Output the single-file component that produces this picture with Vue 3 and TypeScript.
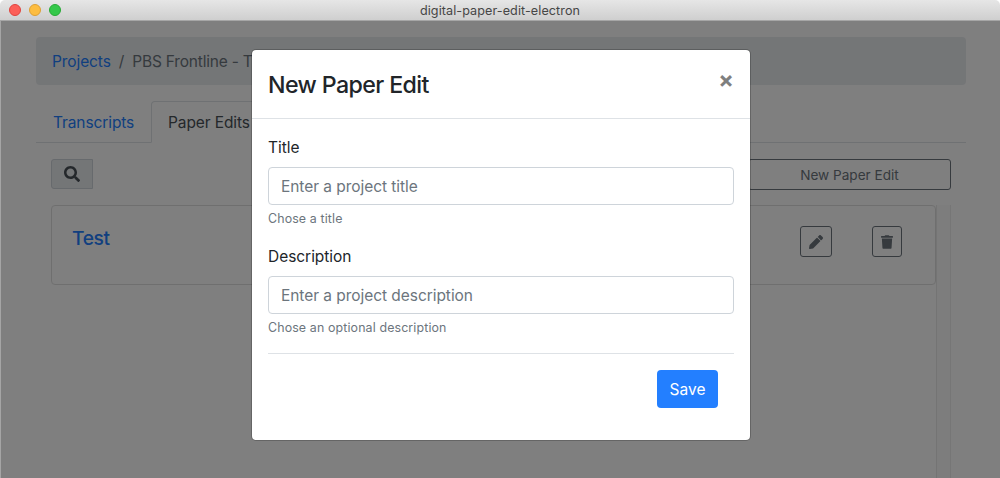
<script setup lang="ts">
import { ref } from 'vue'

interface Field {
  id: string
  label: string
  placeholder: string
  help: string
}

const fields: Field[] = [
  { id: 'title', label: 'Title', placeholder: 'Enter a project title', help: 'Chose a title' },
  { id: 'description', label: 'Description', placeholder: 'Enter a project description', help: 'Chose an optional description' },
]
const values = ref<Record<string, string>>({ title: '', description: '' })
</script>

<template>
  <div class="window">
    <header class="titlebar">
      <div class="lights">
        <span class="light red"></span><span class="light amber"></span><span class="light green"></span>
      </div>
      <span class="window-title">digital-paper-edit-electron</span>
    </header>

    <main class="page">
      <nav class="breadcrumb">
        <a class="crumb-link">Projects</a><span class="slash">/</span><span class="crumb">PBS Frontline - The Facebook Dilemma</span>
      </nav>
      <div class="tabs">
        <a class="tab first">Transcripts</a>
        <a class="tab active"><span>Paper Edits</span></a>
      </div>
      <section class="panel">
        <div class="toolbar">
          <button class="search" aria-label="Search">
            <svg width="16" height="16" viewBox="0 0 512 512"><path fill="currentColor" d="M505 442.700L405.300 343c-4.500-4.500-10.600-7-17-7H372c27.600-35.300 44-79.700 44-128C416 93.100 322.900 0 208 0S0 93.100 0 208s93.100 208 208 208c48.300 0 92.700-16.400 128-44v16.300c0 6.400 2.500 12.500 7 17l99.700 99.700c9.400 9.400 24.600 9.400 33.900 0l28.300-28.300c9.400-9.400 9.400-24.600.1-34zM208 336c-70.700 0-128-57.200-128-128 0-70.700 57.200-128 128-128 70.700 0 128 57.200 128 128 0 70.700-57.200 128-128 128z"/></svg>
          </button>
          <button class="new-edit"><span>New Paper Edit</span></button>
        </div>
        <div class="list">
          <article class="card">
            <a class="card-title">Test</a>
            <div class="actions">
              <button class="icon-btn edit" aria-label="Edit">
                <svg width="14" height="14" viewBox="0 0 512 512"><path fill="currentColor" d="M497.900 142.100l-46.100 46.100c-4.700 4.700-12.300 4.700-17 0l-111-111c-4.700-4.700-4.700-12.300 0-17l46.100-46.100c18.700-18.700 49.100-18.700 67.900 0l60.100 60.100c18.800 18.700 18.800 49.100 0 67.900zM284.200 99.800L21.600 362.400.4 483.900c-2.900 16.400 11.400 30.600 27.800 27.800l121.500-21.300 262.600-262.600c4.700-4.700 4.700-12.300 0-17l-111-111c-4.800-4.700-12.400-4.700-17.100 0z"/></svg>
              </button>
              <button class="icon-btn trash" aria-label="Delete">
                <svg width="12" height="14" viewBox="0 0 448 512"><path fill="currentColor" d="M432 32H312l-9.400-18.700A24 24 0 0 0 281.100 0H166.800a23.700 23.700 0 0 0-21.400 13.300L136 32H16A16 16 0 0 0 0 48v32a16 16 0 0 0 16 16h416a16 16 0 0 0 16-16V48a16 16 0 0 0-16-16zM53.200 467a48 48 0 0 0 47.900 45h245.800a48 48 0 0 0 47.900-45L416 128H32z"/></svg>
              </button>
            </div>
          </article>
          <div class="track"></div>
        </div>
      </section>
    </main>

    <div class="backdrop">
      <form class="modal" @submit.prevent>
        <header class="modal-header">
          <h4 class="modal-title">New Paper Edit</h4>
          <button type="button" class="close" aria-label="Close">×</button>
        </header>
        <div class="modal-body">
          <div v-for="f in fields" :key="f.id" class="group">
            <label :for="f.id">{{ f.label }}</label>
            <input :id="f.id" v-model="values[f.id]" type="text" :placeholder="f.placeholder" />
            <small>{{ f.help }}</small>
          </div>
          <footer class="modal-footer"><button class="save" type="submit">Save</button></footer>
        </div>
      </form>
    </div>
  </div>
</template>

<style>
body { margin: 0; overflow: hidden; }
</style>

<style scoped>
* { box-sizing: border-box; }
button, input { font-family: inherit; margin: 0; }
.window {
  position: relative;
  height: 478px;
  display: flex;
  flex-direction: column;
  overflow: hidden;
  background: #fff;
  color: #212529;
  font-family: Inter, "Liberation Sans", sans-serif;
  font-size: 15.5px;
  line-height: 24px;
}
.titlebar {
  position: relative;
  z-index: 2;
  height: 21px;
  flex: none;
  display: flex;
  align-items: center;
  justify-content: center;
  background: linear-gradient(#e6e6e6, #cfcfcf);
  border-bottom: 1px solid #a6a6a6;
  border-radius: 5px 5px 0 0;
}
.lights { position: absolute; left: 9px; top: 4px; display: flex; gap: 8px; }
.light { width: 12px; height: 12px; border-radius: 50%; border: 1px solid; }
.red { background: #fc5f58; border-color: #e0443e; }
.amber { background: #fdbd40; border-color: #dea034; }
.green { background: #34c84a; border-color: #27aa35; }
.window-title { padding-top: 2px; font-size: 12.6px; line-height: 20px; color: #464646; letter-spacing: 0.08px; }
.page { padding: 16px 34px 0 36px; flex: 1; display: flex; flex-direction: column; }
.breadcrumb { display: flex; height: 48px; flex: none; padding: 13px 16px 11px; background: #e9ecef; border-radius: 4px; white-space: nowrap; overflow: hidden; }
.crumb-link, .tab, .card-title { color: #237fff; }
.crumb-link { letter-spacing: -0.1px; }
.slash { padding: 0 8px; color: #6c757d; }
.crumb { color: #6c757d; letter-spacing: -0.2px; }
.tabs { display: flex; height: 42px; flex: none; margin-top: 16px; border-bottom: 1px solid #dee2e6; }
.tab { height: 42px; padding: 9px 16px; border: 1px solid transparent; border-radius: 4px 4px 0 0; letter-spacing: -0.1px; white-space: nowrap; }
.first { width: 115px; }
.active { color: #495057; background: #fff; border-color: #dee2e6 #dee2e6 #fff; }
.panel { flex: 1; display: flex; flex-direction: column; padding: 16px 15px 0; }
.toolbar { display: flex; justify-content: space-between; height: 31px; }
.search { width: 42px; height: 30px; padding: 0; display: grid; place-items: center; background: #e9ecef; border: 1px solid #ced4da; border-radius: 3px 0 0 3px; color: #495057; }
.new-edit { width: 203px; height: 31px; padding: 0; background: transparent; color: #6c757d; border: 1px solid #6c757d; border-radius: 3px; font-size: 13.6px; }
.list { flex: 1; display: flex; margin-top: 15px; }
.card { flex: 1; height: 80px; display: flex; justify-content: space-between; padding: 20px 33px 0 20px; border: 1px solid #dfdfdf; border-radius: 4px; }
.card-title { font-size: 19.2px; font-weight: 500; letter-spacing: -0.35px; }
.actions { display: flex; gap: 40px; }
.icon-btn { height: 31px; padding: 0; display: grid; place-items: center; background: transparent; border: 1px solid #6c757d; border-radius: 3px; color: #6c757d; }
.edit { width: 32px; }
.trash { width: 30px; }
.track { width: 15px; background: #fafafa; border-left: 1px solid #e8e8e8; border-right: 1px solid #ededed; }
.backdrop { position: absolute; inset: 21px 0 0; display: flex; justify-content: center; align-items: flex-start; padding-top: 28px; padding-left: 1px; background: rgba(0, 0, 0, 0.5); border-left: 1px solid #a5a5a5; }
.modal { width: 500px; height: 392px; background: #fff; background-clip: padding-box; border: 1px solid rgba(0, 0, 0, 0.2); border-radius: 5px; }
.modal-header { display: flex; justify-content: space-between; height: 69px; padding: 16px; border-bottom: 1px solid #dee2e6; }
.modal-title { margin: 0; font-size: 23.2px; line-height: 39px; font-weight: 500; letter-spacing: -0.6px; }
.close { width: 16px; height: 28px; padding: 0; border: 0; background: transparent; color: #7f7f7f; font-size: 23px; line-height: 27px; font-weight: 700; }
.modal-body { padding: 16px; }
.group { display: flex; flex-direction: column; height: 109px; }
label { height: 24px; margin-bottom: 8px; padding-top: 1px; letter-spacing: -0.04px; }
input { height: 38px; flex: none; padding: 6px 12px; border: 1px solid #ced4da; border-radius: 4px; font-size: 15.5px; outline: none; letter-spacing: -0.05px; }
input::placeholder { color: #6c757d; opacity: 1; }
small { margin-top: 4px; font-size: 12.4px; line-height: 19px; color: #6c757d; letter-spacing: 0.13px; }
.modal-footer { display: flex; justify-content: flex-end; padding: 16px; border-top: 1px solid #dee2e6; }
.save { width: 61px; height: 38px; padding: 0; background: #237fff; border: 0; border-radius: 4px; color: #fff; font-size: 15.5px; }
</style>
